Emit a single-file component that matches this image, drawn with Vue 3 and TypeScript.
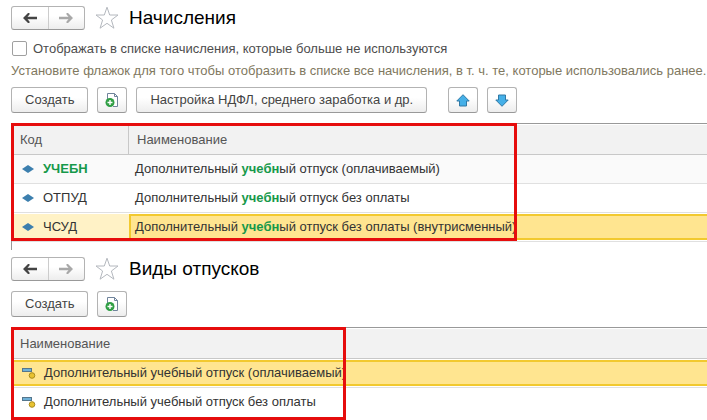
<script setup lang="ts">
interface Accrual {
  code: string
  before: string
  match: string
  after: string
  codeMatches?: boolean
  selected?: boolean
}

interface LeaveKind {
  name: string
  selected?: boolean
}

const accruals: Accrual[] = [
  { code: 'УЧЕБН', before: 'Дополнительный ', match: 'учебн', after: 'ый отпуск (оплачиваемый)', codeMatches: true },
  { code: 'ОТПУД', before: 'Дополнительный ', match: 'учебн', after: 'ый отпуск без оплаты' },
  { code: 'ЧСУД', before: 'Дополнительный ', match: 'учебн', after: 'ый отпуск без оплаты (внутрисменный)', selected: true },
]

const leaveKinds: LeaveKind[] = [
  { name: 'Дополнительный учебный отпуск (оплачиваемый)', selected: true },
  { name: 'Дополнительный учебный отпуск без оплаты' },
]
</script>

<template>
  <main class="page">
    <section class="pane accruals">
      <header class="head">
        <div class="nav">
          <button type="button" aria-label="Назад">
            <svg width="14" height="10" viewBox="0 0 14 10"><path d="M0 5 5 0h1.500v1.500L4.500 3.800H14v2.400H4.500L6.500 8.500V10H5z" fill="#444" /></svg>
          </button>
          <button type="button" aria-label="Вперед">
            <svg width="14" height="10" viewBox="0 0 14 10"><path d="M14 5 9 0H7.500v1.500l2 2.300H0v2.400h9.500l-2 2.300V10H9z" fill="#a8a8a8" /></svg>
          </button>
        </div>
        <button type="button" class="star" aria-label="В избранное">
          <svg width="24" height="24" viewBox="0 0 24 24"><path d="M12 1.200 14.700 9h8.300l-6.600 5 2.500 8.200L12 17.300l-6.900 4.900L7.600 14 1 9h8.300z" fill="#fff" stroke="#b4b8be" stroke-width="1" /></svg>
        </button>
        <h1>Начисления</h1>
      </header>

      <label class="option">
        <input type="checkbox" />
        <span>Отображать в списке начисления, которые больше не используются</span>
      </label>
      <p class="hint">Установите флажок для того чтобы отобразить в списке все начисления, в т. ч. те, которые использовались ранее.</p>

      <div class="toolbar">
        <button type="button" class="btn create">Создать</button>
        <button type="button" class="btn icon" aria-label="Создать копированием">
          <svg width="14" height="16" viewBox="0 0 14 16">
            <path d="M2.500 8V1.500H9.500L12.500 4.500V14.500H8" fill="#fff" stroke="#70849c" />
            <path d="M9.500 1.500V4.500H12.500" fill="none" stroke="#70849c" />
            <circle cx="5" cy="10.500" r="4.500" fill="#2f9e44" />
            <path d="M5 8v5M2.500 10.500h5" stroke="#fff" stroke-width="1.400" />
          </svg>
        </button>
        <button type="button" class="btn settings">Настройка НДФЛ, среднего заработка и др.</button>
        <div class="movers">
          <button type="button" class="btn icon" aria-label="Переместить вверх">
            <svg width="14" height="13" viewBox="0 0 14 13"><path d="M7 .7 13.200 7H10.500V12H3.500V7H.8z" fill="#45b0e8" stroke="#3079a5" /></svg>
          </button>
          <button type="button" class="btn icon" aria-label="Переместить вниз">
            <svg width="14" height="13" viewBox="0 0 14 13"><path d="M7 12.300 13.200 6H10.500V1H3.500V6H.8z" fill="#45b0e8" stroke="#3079a5" /></svg>
          </button>
        </div>
      </div>

      <div class="list">
        <table>
          <thead>
            <tr>
              <th class="code">Код</th>
              <th>Наименование</th>
            </tr>
          </thead>
          <tbody>
            <tr v-for="row in accruals" :key="row.code" :class="{ selected: row.selected }">
              <td class="code">
                <div class="cell marked">
                  <svg width="12" height="8" viewBox="0 0 12 8"><path d="M0 4 6 0l6 4-6 4z" fill="#3c7fae" /></svg>
                  <b v-if="row.codeMatches" class="match">{{ row.code }}</b>
                  <span v-else>{{ row.code }}</span>
                </div>
              </td>
              <td>
                <div class="cell name" :class="{ current: row.selected }">{{ row.before }}<b class="match">{{ row.match }}</b>{{ row.after }}</div>
              </td>
            </tr>
          </tbody>
        </table>
        <div class="frame wide"></div>
      </div>
    </section>

    <section class="pane kinds">
      <header class="head">
        <div class="nav">
          <button type="button" aria-label="Назад">
            <svg width="14" height="10" viewBox="0 0 14 10"><path d="M0 5 5 0h1.500v1.500L4.500 3.800H14v2.400H4.500L6.500 8.500V10H5z" fill="#444" /></svg>
          </button>
          <button type="button" aria-label="Вперед">
            <svg width="14" height="10" viewBox="0 0 14 10"><path d="M14 5 9 0H7.500v1.500l2 2.300H0v2.400h9.500l-2 2.300V10H9z" fill="#a8a8a8" /></svg>
          </button>
        </div>
        <button type="button" class="star" aria-label="В избранное">
          <svg width="24" height="24" viewBox="0 0 24 24"><path d="M12 1.200 14.700 9h8.300l-6.600 5 2.500 8.200L12 17.300l-6.900 4.900L7.600 14 1 9h8.300z" fill="#fff" stroke="#b4b8be" stroke-width="1" /></svg>
        </button>
        <h1>Виды отпусков</h1>
      </header>

      <div class="toolbar">
        <button type="button" class="btn create">Создать</button>
        <button type="button" class="btn icon" aria-label="Создать копированием">
          <svg width="14" height="16" viewBox="0 0 14 16">
            <path d="M2.500 8V1.500H9.500L12.500 4.500V14.500H8" fill="#fff" stroke="#70849c" />
            <path d="M9.500 1.500V4.500H12.500" fill="none" stroke="#70849c" />
            <circle cx="5" cy="10.500" r="4.500" fill="#2f9e44" />
            <path d="M5 8v5M2.500 10.500h5" stroke="#fff" stroke-width="1.400" />
          </svg>
        </button>
      </div>

      <div class="list">
        <table>
          <thead>
            <tr>
              <th>Наименование</th>
            </tr>
          </thead>
          <tbody>
            <tr v-for="row in leaveKinds" :key="row.name">
              <td>
                <div class="cell marked" :class="{ current: row.selected }">
                  <svg width="14" height="12" viewBox="0 0 14 12">
                    <rect x=".5" y="1.500" width="9" height="3" fill="#6fb1d8" stroke="#55768c" />
                    <circle cx="10" cy="8.500" r="2.800" fill="#e8c231" stroke="#a98b1c" />
                  </svg>
                  <span>{{ row.name }}</span>
                </div>
              </td>
            </tr>
          </tbody>
        </table>
        <div class="frame narrow"></div>
      </div>
    </section>
  </main>
</template>

<style>
body {
  margin: 0;
  background: #fff;
}
</style>

<style scoped>
.page {
  font-family: "Liberation Sans", Arial, sans-serif;
  font-size: 13px;
  line-height: 16px;
  color: #333;
  overflow: hidden;
}

.page * {
  box-sizing: border-box;
}

button {
  font: inherit;
  color: inherit;
  padding: 0;
}

.pane {
  padding-left: 11px;
}

.accruals {
  padding-top: 6px;
}

.kinds {
  padding-top: 7px;
}

.head {
  display: flex;
  align-items: center;
  height: 24px;
}

.nav {
  display: flex;
  width: 74px;
  height: 24px;
  border: 1px solid #b3b3b3;
  border-bottom-color: #999;
  border-radius: 3px;
  background: linear-gradient(#fff 40%, #ededed);
}

.nav button {
  flex: 1;
  display: flex;
  align-items: center;
  justify-content: center;
  border: 0;
  background: none;
}

.nav button + button {
  border-left: 1px solid #ccc;
}

.star {
  display: flex;
  margin: 0 10px;
  border: 0;
  background: none;
}

h1 {
  margin: 0;
  font-size: 19px;
  line-height: 24px;
  font-weight: 400;
  color: #000;
}

.option {
  display: flex;
  align-items: center;
  gap: 6px;
  margin-top: 11px;
  height: 15px;
  color: #4d4d4d;
}

.option input {
  appearance: none;
  width: 15px;
  height: 15px;
  margin: 0 0 0 1px;
  border: 1px solid #a0a0a0;
  border-radius: 2px;
  background: #fff;
}

.hint {
  margin: 7px 0 8px;
  color: #7f7860;
  white-space: nowrap;
}

.toolbar {
  display: flex;
  gap: 9px;
}

.kinds .toolbar {
  margin-top: 10px;
}

.btn {
  height: 26px;
  padding: 0 13px;
  border: 1px solid #b3b3b3;
  border-bottom-color: #999;
  border-radius: 3px;
  background: linear-gradient(#fff 40%, #ededed);
  color: #444;
  white-space: nowrap;
}

.btn.icon {
  display: flex;
  align-items: center;
  justify-content: center;
  width: 30px;
  padding: 0;
}

.movers {
  display: flex;
  gap: 9px;
  margin-left: 12px;
}

.list {
  position: relative;
  margin-top: 10px;
  border-top: 1px solid #999;
  border-left: 1px solid #999;
}

.accruals .list {
  padding-bottom: 8px;
}

.kinds .list {
  padding-bottom: 3px;
}

table {
  width: 100%;
  table-layout: fixed;
  border-collapse: separate;
  border-spacing: 0;
}

th {
  height: 31px;
  padding: 0 8px;
  border-top: 1px solid #fff;
  border-bottom: 1px solid #c8c8c8;
  background: #f2f2f2;
  color: #555;
  font-weight: 400;
  text-align: left;
}

th.code {
  width: 117px;
  border-right: 1px solid #c8c8c8;
}

td {
  height: 29px;
  padding: 1px 0;
  border-bottom: 1px solid #e0e0e0;
}

.kinds tbody tr:last-child td {
  border-bottom-color: transparent;
}

.accruals tbody tr:first-child td {
  background: #fafafa;
}

.cell {
  display: flex;
  align-items: center;
  height: 26px;
  white-space: pre;
}

.marked {
  gap: 9px;
  padding-left: 10px;
}

.kinds .marked {
  gap: 8px;
}

.name {
  padding-left: 6px;
}

.selected .code .cell {
  background: #fff2c6;
}

.current {
  background: #ffe590;
  border: solid #f2c92f;
  border-width: 2px 0;
}

.name.current {
  padding-left: 4px;
  border-left-width: 2px;
}

.match {
  color: #16994a;
}

.frame {
  position: absolute;
  top: -1px;
  left: -1px;
  border: 3px solid #e60d0d;
  pointer-events: none;
}

.wide {
  width: 506px;
  bottom: 9px;
}

.narrow {
  width: 335px;
  bottom: 0;
}
</style>
